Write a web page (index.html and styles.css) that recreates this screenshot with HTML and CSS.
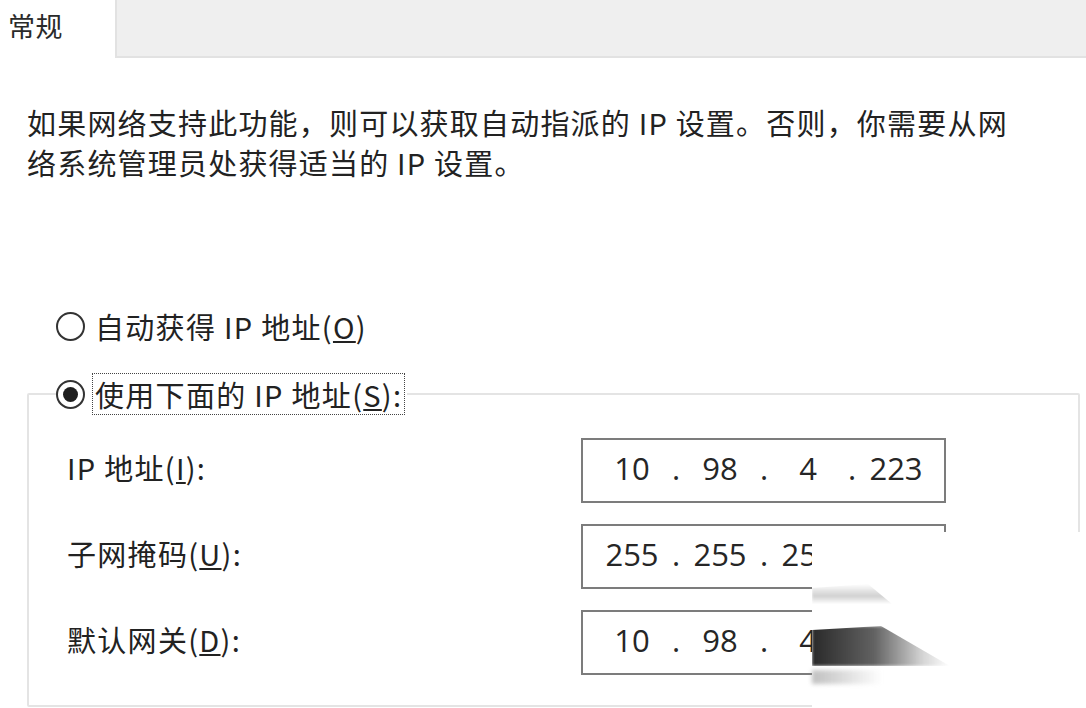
FILE: index.html
```html
<!DOCTYPE html>
<html lang="zh-CN">
<head>
<meta charset="utf-8">
<title>常规</title>
<link rel="stylesheet" href="styles.css">
</head>
<body>
<div class="page">
  <div class="tabs">
    <div class="tab tab-active">常规</div>
    <div class="tab-rest"></div>
  </div>

  <p class="desc">如果网络支持此功能，则可以获取自动指派的 IP 设置。否则，你需要从网<br>络系统管理员处获得适当的 IP 设置。</p>

  <div class="radio-row auto">
    <span class="radio"></span>
    <span class="radio-label">自动获得 IP 地址(<u>O</u>)</span>
  </div>

  <fieldset class="group">
    <legend class="legend">
      <span class="radio checked"></span>
      <span class="radio-label focus">使用下面的 IP 地址(<u>S</u>):</span>
    </legend>
    <div class="row">
      <span class="label">IP 地址(<u>I</u>):</span>
      <div class="ipbox">
        <span class="oct">10</span><span class="dot">.</span><span class="oct">98</span><span class="dot">.</span><span class="oct">4</span><span class="dot">.</span><span class="oct">223</span>
      </div>
    </div>
    <div class="row">
      <span class="label">子网掩码(<u>U</u>):</span>
      <div class="ipbox">
        <span class="oct">255</span><span class="dot">.</span><span class="oct">255</span><span class="dot">.</span><span class="oct">255</span><span class="dot">.</span><span class="oct">0</span>
      </div>
    </div>
    <div class="row">
      <span class="label">默认网关(<u>D</u>):</span>
      <div class="ipbox">
        <span class="oct">10</span><span class="dot">.</span><span class="oct">98</span><span class="dot">.</span><span class="oct">4</span><span class="dot">.</span><span class="oct">1</span>
      </div>
    </div>
  </fieldset>

  <div class="smear">
    <div class="smear-white"></div>
    <div class="streak streak-a"></div>
    <div class="streak streak-b"></div>
    <div class="streak streak-c"></div>
  </div>
</div>
</body>
</html>
```

FILE: styles.css
```css
html, body {
  margin: 0;
  padding: 0;
  background: #ffffff;
}

.page {
  position: relative;
  width: 1086px;
  height: 708px;
  overflow: hidden;
  font-family: "Noto Sans CJK SC", "Noto Sans", sans-serif;
  color: #222222;
  font-size: 29px;
  letter-spacing: 1.3px;
}

.tabs {
  display: flex;
  height: 58px;
}

.tab-active {
  width: 107px;
  padding-left: 8px;
  line-height: 52px;
  font-size: 27px;
  letter-spacing: 0.5px;
  background: #ffffff;
  color: #2a2a2a;
}

.tab-rest {
  flex: 1;
  background: #efefef;
  border-left: 2px solid #e2e2e2;
  border-bottom: 2px solid #e2e2e2;
}

.desc {
  margin: 44px 0 0 27px;
  line-height: 40px;
  font-size: 29px;
  letter-spacing: 1.2px;
}

.radio-row {
  display: flex;
  align-items: center;
  height: 40px;
  margin: 124px 0 0 56px;
}

.radio {
  box-sizing: border-box;
  width: 29px;
  height: 29px;
  border: 2px solid #333333;
  border-radius: 50%;
  display: inline-flex;
  align-items: center;
  justify-content: center;
  flex: none;
  background: #ffffff;
}

.radio.checked::after {
  content: "";
  width: 15px;
  height: 15px;
  border-radius: 50%;
  background: #1e1e1e;
}

.radio-label {
  margin-left: 10px;
  line-height: 40px;
}

.group {
  box-sizing: border-box;
  margin: 26px 6px 0 27px;
  padding: 22px 0 0 0;
  height: 335px;
  border: 2px solid #e4e4e4;
  border-radius: 2px;
}

.legend {
  display: flex;
  align-items: center;
  margin-left: 27px;
  padding: 0 2px 0 0;
  height: 44px;
}

.legend .radio-label {
  margin-left: 7px;
  padding: 0 2px;
  line-height: 40px;
  border: 1px dotted #444444;
}

.row {
  display: grid;
  grid-template-columns: 514px 365px;
  align-items: center;
  height: 65px;
  margin: 0 0 21px 38px;
}

.label {
  font-size: 29px;
  padding-bottom: 8px;
}

.ipbox {
  box-sizing: border-box;
  height: 65px;
  border: 2px solid #7c7c7c;
  padding: 0 0 5px 20px;
  display: flex;
  align-items: center;
  font-family: "Open Sans", "Noto Sans", sans-serif;
  font-size: 31px;
  letter-spacing: 0;
  color: #262626;
}

.oct {
  width: 58px;
  text-align: center;
}

.dot {
  width: 30px;
  text-align: center;
}

/* blurred smear over the lower right fields */
.smear {
  position: absolute;
  left: 812px;
  top: 532px;
  width: 274px;
  height: 176px;
  pointer-events: none;
}

.smear-white {
  position: absolute;
  inset: 0;
  background: #ffffff;
}

.streak {
  position: absolute;
}

.streak-a {
  left: 0;
  top: 52px;
  width: 80px;
  height: 20px;
  background: linear-gradient(180deg, rgba(255,255,255,0) 0%, rgba(170,170,170,0.55) 60%, rgba(255,255,255,0) 100%);
  clip-path: polygon(0 20%, 70% 0, 100% 100%, 0 100%);
  filter: blur(1px);
}

.streak-b {
  left: 0;
  top: 94px;
  width: 138px;
  height: 40px;
  background: linear-gradient(90deg, rgba(30,30,30,0.95) 0%, rgba(70,70,70,0.85) 45%, rgba(160,160,160,0.45) 80%, rgba(255,255,255,0) 100%);
  clip-path: polygon(0 10%, 50% 0, 100% 100%, 0 100%);
  filter: blur(1.5px);
}

.streak-c {
  left: 0;
  top: 138px;
  width: 70px;
  height: 14px;
  background: linear-gradient(90deg, rgba(150,150,150,0.6), rgba(255,255,255,0));
  filter: blur(2px);
}
```
